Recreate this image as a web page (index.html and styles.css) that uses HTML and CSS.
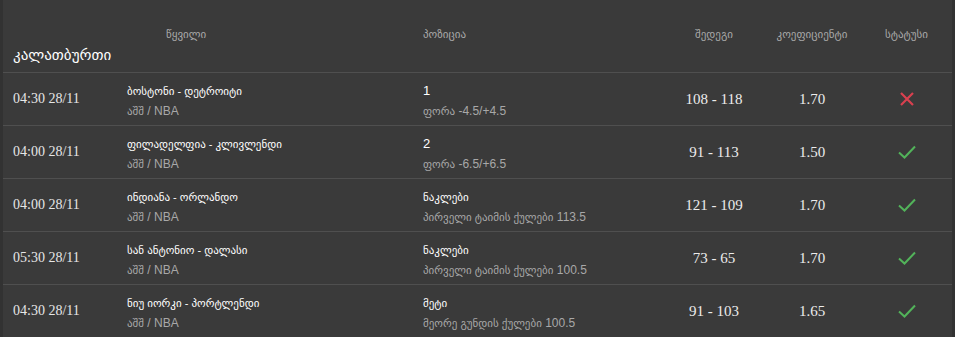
FILE: index.html
```html
<!DOCTYPE html>
<html lang="ka">
<head>
<meta charset="utf-8">
<link rel="stylesheet" href="styles.css">
</head>
<body>
<div class="board">
  <div class="head">
    <div class="grid labels">
      <div></div>
      <div class="lbl lbl-pair">წყვილი</div>
      <div class="lbl">პოზიცია</div>
      <div class="lbl center">შედეგი</div>
      <div class="lbl center">კოეფიციენტი</div>
      <div class="lbl center">სტატუსი</div>
    </div>
    <div class="sport">კალათბურთი</div>
  </div>

  <div class="grid row">
    <div class="time">04:30 28/11</div>
    <div class="cell"><div class="main">ბოსტონი - დეტროიტი</div><div class="sub"><span class="ka">აშშ</span> / NBA</div></div>
    <div class="cell"><div class="main num-pos">1</div><div class="sub"><span class="ka">ფორა</span> -4.5/+4.5</div></div>
    <div class="num">108 - 118</div>
    <div class="num">1.70</div>
    <div class="status"><svg width="16" height="16" viewBox="0 0 16 16"><path d="M2 2L14 14M14 2L2 14" stroke="#d8404f" stroke-width="2.2" fill="none"/></svg></div>
  </div>

  <div class="grid row">
    <div class="time">04:00 28/11</div>
    <div class="cell"><div class="main">ფილადელფია - კლივლენდი</div><div class="sub"><span class="ka">აშშ</span> / NBA</div></div>
    <div class="cell"><div class="main num-pos">2</div><div class="sub"><span class="ka">ფორა</span> -6.5/+6.5</div></div>
    <div class="num">91 - 113</div>
    <div class="num">1.50</div>
    <div class="status"><svg width="18" height="14" viewBox="0 0 18 14"><path d="M1 7.5L6.5 12.5L17 1.5" stroke="#52b35a" stroke-width="2" fill="none"/></svg></div>
  </div>

  <div class="grid row">
    <div class="time">04:00 28/11</div>
    <div class="cell"><div class="main">ინდიანა - ორლანდო</div><div class="sub"><span class="ka">აშშ</span> / NBA</div></div>
    <div class="cell"><div class="main">ნაკლები</div><div class="sub"><span class="ka">პირველი ტაიმის ქულები</span> 113.5</div></div>
    <div class="num">121 - 109</div>
    <div class="num">1.70</div>
    <div class="status"><svg width="18" height="14" viewBox="0 0 18 14"><path d="M1 7.5L6.5 12.5L17 1.5" stroke="#52b35a" stroke-width="2" fill="none"/></svg></div>
  </div>

  <div class="grid row">
    <div class="time">05:30 28/11</div>
    <div class="cell"><div class="main">სან ანტონიო - დალასი</div><div class="sub"><span class="ka">აშშ</span> / NBA</div></div>
    <div class="cell"><div class="main">ნაკლები</div><div class="sub"><span class="ka">პირველი ტაიმის ქულები</span> 100.5</div></div>
    <div class="num">73 - 65</div>
    <div class="num">1.70</div>
    <div class="status"><svg width="18" height="14" viewBox="0 0 18 14"><path d="M1 7.5L6.5 12.5L17 1.5" stroke="#52b35a" stroke-width="2" fill="none"/></svg></div>
  </div>

  <div class="grid row">
    <div class="time">04:30 28/11</div>
    <div class="cell"><div class="main">ნიუ იორკი - პორტლენდი</div><div class="sub"><span class="ka">აშშ</span> / NBA</div></div>
    <div class="cell"><div class="main">მეტი</div><div class="sub"><span class="ka">მეორე გუნდის ქულები</span> 100.5</div></div>
    <div class="num">91 - 103</div>
    <div class="num">1.65</div>
    <div class="status"><svg width="18" height="14" viewBox="0 0 18 14"><path d="M1 7.5L6.5 12.5L17 1.5" stroke="#52b35a" stroke-width="2" fill="none"/></svg></div>
  </div>
</div>
</body>
</html>
```
FILE: styles.css
```css
html, body {
  margin: 0;
  padding: 0;
  background: #323232;
  height: 100%;
  overflow: hidden;
}
.board {
  margin: 0 3px;
  background: #3a3a3a;
  min-height: 337px;
  font-family: "Liberation Sans", "DejaVu Sans", sans-serif;
  color: #f0f0f0;
}
.grid {
  display: grid;
  grid-template-columns: 124px 296px 242px 98px 98px 1fr;
}
.head {
  padding-top: 27px;
  padding-bottom: 7px;
  border-bottom: 1px solid #4f4f4f;
}
.lbl {
  font-size: 11px;
  line-height: 14px;
  color: #a9a9a9;
}
.lbl-pair {
  padding-left: 39px;
}
.center {
  text-align: center;
}
.sport {
  margin-top: 4px;
  padding-left: 10px;
  font-size: 15px;
  line-height: 20px;
  color: #ffffff;
}
.row {
  border-bottom: 1px solid #4f4f4f;
  align-items: center;
  min-height: 52px;
}
.time {
  padding-left: 10px;
  font-family: "Liberation Serif", "DejaVu Serif", serif;
  font-size: 14px;
  color: #e6e6e6;
}
.cell {
  padding: 9px 0 5px;
  display: flex;
  flex-direction: column;
  gap: 2px;
}
.main {
  font-size: 11px;
  line-height: 18px;
  color: #ffffff;
}
.num-pos {
  font-size: 13px;
}
.sub {
  font-size: 12px;
  line-height: 18px;
  color: #a8a8a8;
}
.ka {
  font-size: 11px;
}
.num {
  text-align: center;
  font-family: "Liberation Serif", "DejaVu Serif", serif;
  font-size: 15px;
  color: #ececec;
}
.status {
  display: flex;
  justify-content: center;
  align-items: center;
}
.status svg {
  display: block;
}
```
